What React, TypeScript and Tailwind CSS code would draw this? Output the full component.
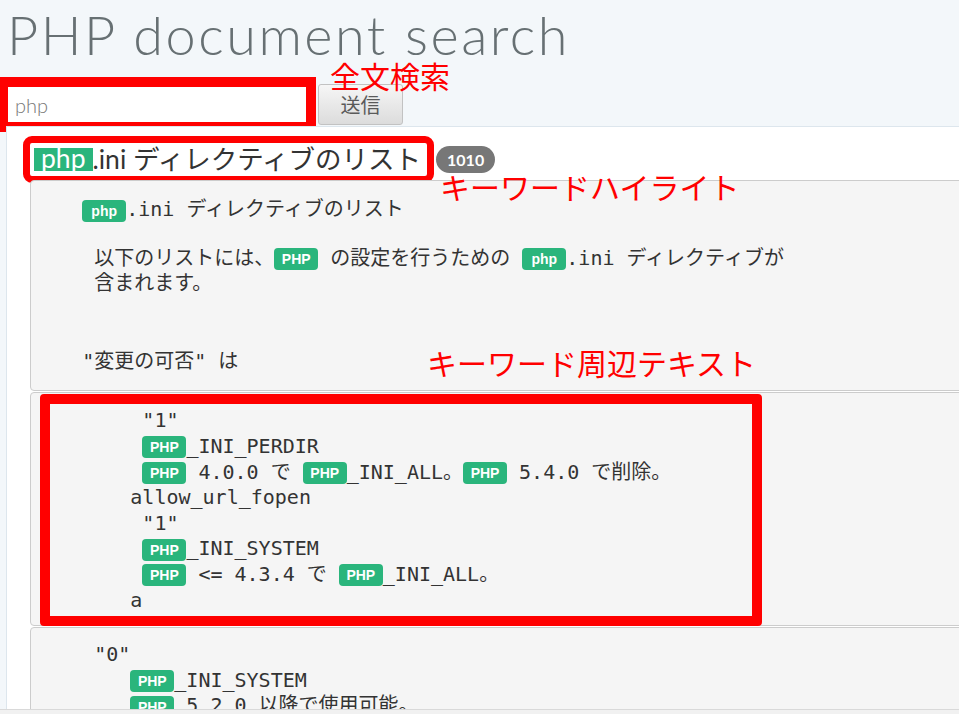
import React from "react"

const mono = "font-['DejaVu_Sans_Mono','Noto_Sans_CJK_JP',monospace]"

function Tag({ children }: { children: React.ReactNode }) {
  return (
    <span className="inline-block h-[22px] w-[44px] rounded-[4px] bg-[#2ab57c] text-center align-middle font-['Liberation_Sans',sans-serif] text-[14px] font-bold leading-[22px] text-white">
      {children}
    </span>
  )
}

function Line({ children }: { children: React.ReactNode }) {
  return <div className="h-[25.6px] whitespace-pre leading-[25.6px]">{children}</div>
}

export default function App() {
  return (
    <div className="relative flex h-[714px] w-full flex-col overflow-hidden bg-[#f3f7fa] font-['Lato','Noto_Sans_CJK_JP',sans-serif]">
      <div className="flex min-h-0 flex-1 flex-col">
        <h1 className="pl-[7px] pt-[8px] text-[54px] font-light leading-none tracking-[2.5px] text-[#677073]">
          PHP document search
        </h1>

        {/* search form */}
        <div className="mt-[22px] flex h-[41px] items-center">
          <div className="ml-[8px] h-[35px] w-[298px] bg-white outline-[10px] outline-solid outline-[#ff0000]">
            <input
              defaultValue="php"
              className="h-full w-full bg-transparent pl-[7px] text-[20px] font-light text-[#777] outline-none"
            />
          </div>
          <button className="ml-[12px] h-[41px] w-[85px] rounded-[3px] border border-[#c2c2c2] bg-gradient-to-b from-[#f6f6f6] to-[#dcdcdc] text-[20px] text-[#5a5a5a]">
            送信
          </button>
        </div>

        {/* results */}
        <div className="mt-[1px] ml-[6px] flex min-h-0 flex-1 flex-col overflow-hidden border-t border-l border-[#dde6ed] bg-white">
          <div className="mt-[16px] ml-[23px] flex items-center">
            <h3 className="flex h-[33px] items-center rounded-[2px] pl-[4px] pr-[6px] text-[26.5px] text-[#333] outline-[7px] outline-solid outline-[#ff0000]">
              <span className="inline-block h-[23px] bg-[#2ab57c] px-[7px] leading-[21px] text-white">php</span>
              .ini ディレクティブのリスト
            </h3>
            <span className="ml-[9px] flex h-[27px] w-[59px] items-center justify-center rounded-full bg-[#777] text-[16px] font-bold text-white">
              1010
            </span>
          </div>

          <div className={`mt-[4px] ml-[23px] mr-[-40px] rounded-[4px] border border-[#cccccc] bg-[#f5f5f5] pl-[3px] pt-[16px] pb-[16px] text-[20px] text-[#333] ${mono}`}>
            <Line>{"    "}<Tag>php</Tag>.ini ディレクティブのリスト</Line>
            <div className="mt-[23px]">
              <Line>{"     以下のリストには、"}<Tag>PHP</Tag>{" の設定を行うための "}<Tag>php</Tag>.ini ディレクティブが</Line>
              <Line>{"     含まれます。"}</Line>
            </div>
            <div className="mt-[52px]">
              <Line>{'    "変更の可否" は'}</Line>
            </div>
          </div>

          <div className={`relative mt-[1px] ml-[23px] mr-[-40px] rounded-[4px] border border-[#cccccc] bg-[#f5f5f5] pl-[3px] pt-[15px] pb-[12px] text-[20px] text-[#333] ${mono}`}>
            <Line>{'         "1"'}</Line>
            <Line>{"         "}<Tag>PHP</Tag>_INI_PERDIR</Line>
            <Line>{"         "}<Tag>PHP</Tag>{" 4.0.0 で "}<Tag>PHP</Tag>_INI_ALL。<Tag>PHP</Tag>{" 5.4.0 で削除。"}</Line>
            <Line>{"        allow_url_fopen"}</Line>
            <Line>{'         "1"'}</Line>
            <Line>{"         "}<Tag>PHP</Tag>_INI_SYSTEM</Line>
            <Line>{"         "}<Tag>PHP</Tag>{" <= 4.3.4 で "}<Tag>PHP</Tag>_INI_ALL。</Line>
            <Line>{"        a"}</Line>
            <div className="absolute top-[1px] -bottom-[1px] left-[9px] w-[722px] rounded-[4px] border-[10px] border-[#ff0000]" />
          </div>

          <div className={`mt-[1px] ml-[23px] mr-[-40px] rounded-[4px] border border-[#cccccc] bg-[#f5f5f5] pl-[3px] pt-[14px] pb-[15px] text-[20px] text-[#333] ${mono}`}>
            <Line>{'     "0"'}</Line>
            <Line>{"        "}<Tag>PHP</Tag>_INI_SYSTEM</Line>
            <Line>{"        "}<Tag>PHP</Tag>{" 5.2.0 以降で使用可能。"}</Line>
            <Line>{"     allow_url_include"}</Line>
            <Line>{'         "0"'}</Line>
          </div>
        </div>
      </div>

      <div className="h-[5px] border-t border-[#d9d9d9] bg-[#f1f1f1]" />

      {/* annotations */}
      <span className="absolute left-[330px] top-[60px] font-['Noto_Sans_CJK_JP',sans-serif] text-[30px] leading-[30px] text-[#ff0000]">全文検索</span>
      <span className="absolute left-[440px] top-[171px] font-['Noto_Sans_CJK_JP',sans-serif] text-[30px] leading-[30px] text-[#ff0000]">キーワードハイライト</span>
      <span className="absolute left-[427px] top-[347px] font-['Noto_Sans_CJK_JP',sans-serif] text-[30px] leading-[30px] text-[#ff0000]">キーワード周辺テキスト</span>
    </div>
  )
}
